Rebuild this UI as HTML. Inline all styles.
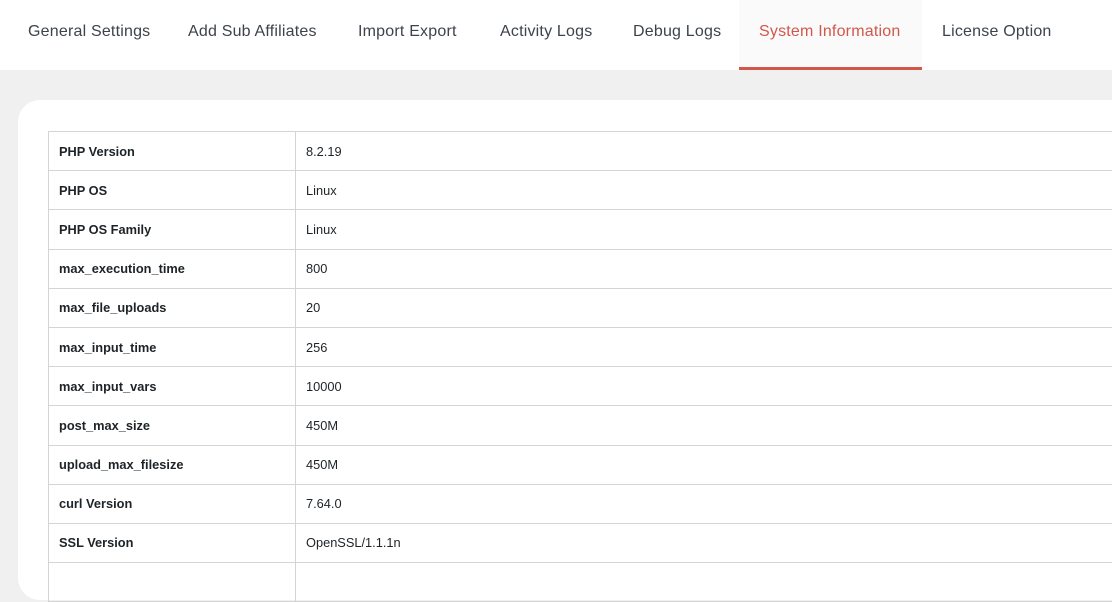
<!DOCTYPE html>
<html><head><style>
*{margin:0;padding:0;box-sizing:border-box}
body{width:1112px;height:571px;overflow:hidden;background:#f0f0f1;font-family:"Liberation Sans",sans-serif;position:relative}
.hdr{position:absolute;left:0;top:0;width:1112px;height:70px;background:#fff}
.tab{position:absolute;top:0;height:70px;line-height:64px;font-size:16px;letter-spacing:0.2px;color:#3c434a;white-space:nowrap}
.act{background:#fbfafa;color:#d2574b;border-bottom:3px solid #d2574b;padding:0 20px}
.card{position:absolute;left:18px;top:100px;width:1120px;height:500px;background:#fff;border-radius:22px}
table{position:absolute;left:48px;top:131px;border-collapse:collapse;width:1100px}
td{border:1px solid #d4d4d4;height:39.2px;font-size:12.8px;color:#1d2327;padding:0 10px}
td:first-child{width:247px;font-weight:bold}
</style></head><body>
<div class="hdr"></div>
<div class="tab" style="left:28px">General Settings</div>
<div class="tab" style="left:188px">Add Sub Affiliates</div>
<div class="tab" style="left:358px">Import Export</div>
<div class="tab" style="left:500px">Activity Logs</div>
<div class="tab" style="left:633px">Debug Logs</div>
<div class="tab act" style="left:739px;width:183px">System Information</div>
<div class="tab" style="left:942px">License Option</div>
<div class="card"></div>
<table>
<tr><td>PHP Version</td><td>8.2.19</td></tr>
<tr><td>PHP OS</td><td>Linux</td></tr>
<tr><td>PHP OS Family</td><td>Linux</td></tr>
<tr><td>max_execution_time</td><td>800</td></tr>
<tr><td>max_file_uploads</td><td>20</td></tr>
<tr><td>max_input_time</td><td>256</td></tr>
<tr><td>max_input_vars</td><td>10000</td></tr>
<tr><td>post_max_size</td><td>450M</td></tr>
<tr><td>upload_max_filesize</td><td>450M</td></tr>
<tr><td>curl Version</td><td>7.64.0</td></tr>
<tr><td>SSL Version</td><td>OpenSSL/1.1.1n</td></tr>
<tr><td>&nbsp;</td><td>&nbsp;</td></tr>
</table>
</body></html>
